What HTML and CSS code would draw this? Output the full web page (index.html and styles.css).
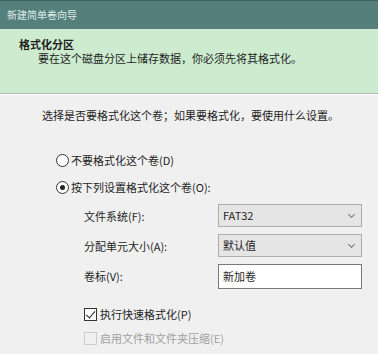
FILE: index.html
```html
<!DOCTYPE html>
<html lang="zh-CN">
<head>
  <meta charset="UTF-8">
  <title>新建简单卷向导</title>
  <link rel="stylesheet" href="styles.css">
</head>
<body>

  <div class="titlebar">新建简单卷向导</div>

  <div class="header">
    <div class="header-title">格式化分区</div>
    <div class="header-sub">要在这个磁盘分区上储存数据，你必须先将其格式化。</div>
  </div>

  <div class="content">
    <p class="intro">选择是否要格式化这个卷；如果要格式化，要使用什么设置。</p>

    <label class="radio-row">
      <span class="radio"></span>不要格式化这个卷(D)
    </label>
    <label class="radio-row">
      <span class="radio checked"></span>按下列设置格式化这个卷(O):
    </label>

    <div class="form">
      <span class="form-label">文件系统(F):</span>
      <div class="combo">FAT32<span class="chevron"></span></div>

      <span class="form-label">分配单元大小(A):</span>
      <div class="combo">默认值<span class="chevron"></span></div>

      <span class="form-label">卷标(V):</span>
      <div class="textbox">新加卷</div>
    </div>

    <label class="check-row">
      <span class="checkbox checked"></span>执行快速格式化(P)
    </label>
    <label class="check-row disabled">
      <span class="checkbox"></span>启用文件和文件夹压缩(E)
    </label>
  </div>

</body>
</html>
```

FILE: styles.css
```css
body {
  margin: 0;
  width: 378px;
  height: 354px;
  overflow: hidden;
  font-family: "Noto Sans CJK SC", "Liberation Sans", sans-serif;
  font-size: 11px;
  color: #1e1e1e;
  background-color: #f0f0f0;
}

.titlebar {
  height: 29px;
  box-sizing: border-box;
  border-top: 1px solid #40635f;
  background-color: #557f7a;
  color: #dfece9;
  font-size: 10px;
  padding-left: 7px;
  line-height: 27px;
}

.header {
  height: 65px;
  box-sizing: border-box;
  background-color: #cdebcf;
  border-bottom: 1px solid #a9b9aa;
  padding: 7px 0 0 19px;
}

.header-title {
  font-weight: bold;
  line-height: 16px;
}

.header-sub {
  padding-left: 19px;
  line-height: 16px;
  margin-top: -2px;
}

.content {
  border-top: 1px solid #ffffff;
  padding: 12px 0 0 42px;
}

.intro {
  margin: 0 0 26px;
  line-height: 17px;
}

.radio-row {
  display: flex;
  align-items: center;
  height: 20px;
  margin: 0 0 7px 14px;
}

.radio {
  width: 11px;
  height: 11px;
  border: 1px solid #333;
  border-radius: 50%;
  background: #fff;
  margin-right: 2px;
  display: flex;
  align-items: center;
  justify-content: center;
}

.radio.checked::after {
  content: "";
  width: 5px;
  height: 5px;
  border-radius: 50%;
  background: #222;
}

.form {
  display: grid;
  grid-template-columns: 134px 144px;
  grid-auto-rows: 23px;
  row-gap: 7px;
  align-items: center;
  margin: 2px 0 17px 42px;
}

.combo {
  height: 23px;
  box-sizing: border-box;
  border: 1px solid #adadad;
  background-color: #e5e5e5;
  padding-left: 4px;
  line-height: 21px;
  position: relative;
}

.chevron {
  position: absolute;
  right: 7px;
  top: 7px;
  width: 4px;
  height: 4px;
  border-right: 1px solid #777;
  border-bottom: 1px solid #777;
  transform: rotate(45deg);
}

.textbox {
  height: 25px;
  margin-top: 2px;
  box-sizing: border-box;
  border: 1px solid #7a7a7a;
  background-color: #fff;
  padding-left: 4px;
  line-height: 23px;
}

.check-row {
  display: flex;
  align-items: center;
  height: 20px;
  margin: 0 0 4px 42px;
}

.checkbox {
  width: 11px;
  height: 11px;
  border: 1px solid #333;
  background: #fff;
  margin-right: 3px;
  position: relative;
}

.checkbox.checked::after {
  content: "";
  position: absolute;
  left: 3px;
  top: 0;
  width: 4px;
  height: 8px;
  border-right: 1px solid #222;
  border-bottom: 1px solid #222;
  transform: rotate(40deg);
}

.check-row.disabled {
  color: #a0a0a0;
}

.check-row.disabled .checkbox {
  border-color: #cccccc;
  background: #f0f0f0;
}
```
